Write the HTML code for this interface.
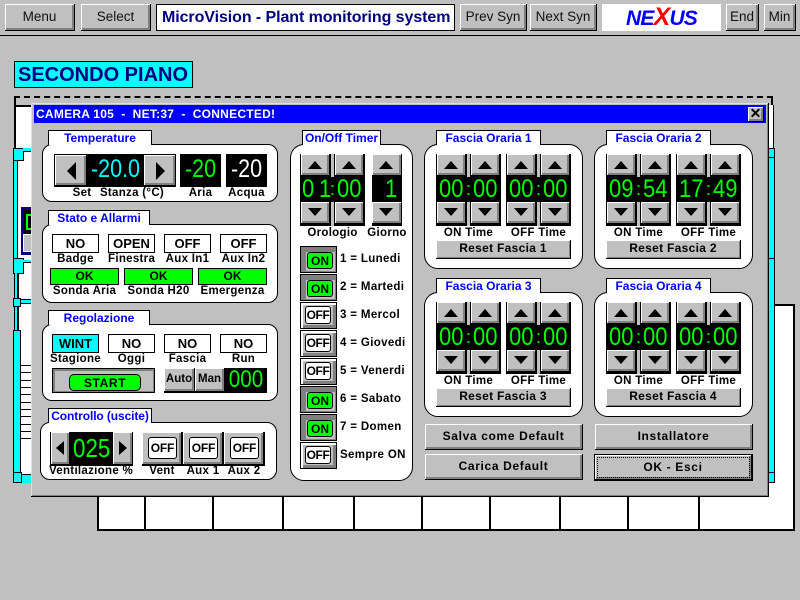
<!DOCTYPE html>
<html><head><meta charset="utf-8"><title>MicroVision</title>
<style>
*{box-sizing:border-box;margin:0;padding:0}
html,body{width:800px;height:600px;overflow:hidden;background:#c0c0c0}
body{position:relative;font-family:"Liberation Sans",sans-serif;color:#000}
div,span{position:absolute}
.b{background:#c0c0c0;border-right:1px solid #000;border-bottom:1px solid #000;box-shadow:inset 1px 1px #fff,inset -1px -1px #808080,inset -2px -2px #808080;text-align:center}
.tb{top:4px;height:27px;font-size:13.5px;line-height:25px;color:#111}
.wl{background:#fff;border:1px solid #000}
.k{background:#000}
.c{background:#0ff;border:1px solid #000}
.tab{background:#fff;border:1px solid #000;border-bottom:0;height:15px;color:#00f;font-size:12px;font-weight:bold;line-height:14px;text-align:center}
.p{background:#fff;border:1px solid #000;border-radius:10px}
.l{font-size:11.5px;font-weight:bold;line-height:13px;text-align:center;white-space:nowrap;letter-spacing:.3px}
.s{background:#fff;color:#000;border:1px solid #000;height:19px;font-size:13px;line-height:17px;text-align:center;width:47px;font-weight:bold}
.g{background:#0f0;border:1px solid #000;height:17px;width:69px;font-size:12px;font-weight:bold;line-height:15px;text-align:center}
.led{color:#0f0;font-size:25px;line-height:25px;text-align:center;white-space:nowrap;transform:scaleX(.86)}
.sp{background:#000;top:0;height:72px}
.sp>.b{height:22px;width:29px}
.strip{top:0;height:72px;width:3px;background:linear-gradient(to bottom,#c0c0c0 23px,#000 23px,#000 48px,#c0c0c0 48px)}
.up:after,.dn:after{content:"";position:absolute;left:7px;border-left:7.5px solid transparent;border-right:7.5px solid transparent}
.up:after{top:7px;border-bottom:8px solid #000}
.dn:after{top:6px;border-top:8px solid #000}
.d{left:300px;width:37px;height:27px;background:#000}
.tg{background:#c0c0c0;left:1px;top:1px;right:1px;bottom:1px;box-shadow:inset 2px 2px #fff,inset -3px -3px #808080}
.on .tg{background:#c0c0c0;box-shadow:inset 5px 5px #808080,inset -1px -1px #808080}
.bx{background:#fff;border:1px solid #000;border-radius:3px;font-size:12px;font-weight:bold;text-align:center;letter-spacing:-.4px;left:5px;top:4px;width:26px;height:18px;line-height:16px}
.on .bx{background:#0f0;left:7px;top:6px;height:17px;line-height:16px;letter-spacing:0}
.dl{left:340px;font-size:11.5px;font-weight:bold;line-height:14px;white-space:nowrap;letter-spacing:.35px}
.num{font-size:25px;line-height:25px;color:#0f0;white-space:nowrap;top:23px;transform:scaleX(.88);transform-origin:0 0}
.cl{font-size:18px;line-height:25px;color:#0f0;top:23px;left:30px}
.n1{left:3px}
.n2{left:37px}
.big{font-size:12px;font-weight:bold;letter-spacing:.65px;line-height:25px;height:26px}
.r{font-size:12px;font-weight:bold;line-height:17px;height:19px;letter-spacing:.3px;box-shadow:inset 1px 1px #fff,inset -1px -1px #808080}
</style></head><body>

<!-- toolbar -->
<div class="k" style="left:0;top:35px;width:800px;height:1px"></div>
<div class="b tb" style="left:5px;width:70px">Menu</div>
<div class="b tb" style="left:81px;width:70px">Select</div>
<div class="wl" style="left:156px;top:4px;width:299px;height:27px;color:#000080;font-size:16px;font-weight:bold;line-height:25px;padding-left:5px;white-space:nowrap;letter-spacing:-.08px">MicroVision - Plant monitoring system</div>
<div class="b tb" style="left:460px;width:67px">Prev Syn</div>
<div class="b tb" style="left:530px;width:67px">Next Syn</div>
<div style="left:602px;top:4px;width:119px;height:27px;background:#fff;text-align:center;font-style:italic;font-weight:bold;font-size:21px;line-height:27px;color:#00f;white-space:nowrap;letter-spacing:-.8px">NE<span style="position:static;color:#f00;font-size:25px">X</span>US</div>
<div class="b tb" style="left:726px;width:33px">End</div>
<div class="b tb" style="left:764px;width:32px">Min</div>

<div style="left:14px;top:61px;width:179px;height:27px;background:#0ff;border:1px solid #000;color:#000080;font-size:20px;font-weight:bold;line-height:26px;padding-left:3px;white-space:nowrap">SECONDO PIANO</div>

<!-- plan behind the dialog -->
<div style="left:14px;top:96px;width:759px;height:10px;border:2px dashed #000;border-bottom:0"></div>
<div style="left:14px;top:105px;width:20px;height:45px;background:#fff;border-left:2px solid #000;border-top:2px solid #000"></div>
<div style="left:17px;top:150px;width:16px;height:330px;background:#fff"></div>
<div class="c" style="left:13px;top:148px;width:11px;height:13px"></div>
<div class="c" style="left:13px;top:160px;width:5px;height:100px"></div>
<div style="left:23px;top:148px;width:9px;height:4px;background:#0ff;border-bottom:1px solid #000"></div>
<div style="left:21px;top:207px;width:11px;height:48px;background:#000080"></div>
<div class="k" style="left:24px;top:210px;width:8px;height:24px"></div>
<div style="left:23px;top:234px;width:9px;height:18px;background:#c0c0c0;border:1px solid #fff"></div>
<div style="left:26px;top:214px;width:6px;height:16px;border:2px solid #0f0;border-right:0"></div>
<div class="c" style="left:13px;top:258px;width:11px;height:16px"></div>
<div style="left:23px;top:260px;width:9px;height:3px;background:#0ff;border-bottom:1px solid #000"></div>
<div class="k" style="left:14px;top:273px;width:5px;height:26px"></div>
<div style="left:15px;top:273px;width:2px;height:26px;background:#0ff"></div>
<div class="c" style="left:13px;top:298px;width:8px;height:9px"></div>
<div style="left:21px;top:299px;width:10px;height:5px;background:#0ff;border-bottom:1px solid #000;border-top:1px solid #000"></div>
<div class="k" style="left:14px;top:307px;width:5px;height:24px"></div>
<div style="left:15px;top:307px;width:2px;height:24px;background:#0ff"></div>
<div class="c" style="left:13px;top:330px;width:8px;height:153px"></div>
<div class="c" style="left:13px;top:472px;width:9px;height:11px"></div>
<div style="left:22px;top:474px;width:9px;height:9px;background:#0ff;border-top:1px solid #000"></div>
<div class="k" style="left:21px;top:365px;width:10px;height:1px"></div>
<div class="k" style="left:21px;top:372px;width:10px;height:1px"></div>
<div class="k" style="left:21px;top:380px;width:10px;height:1px"></div>
<div class="k" style="left:21px;top:387px;width:10px;height:1px"></div>
<div class="k" style="left:21px;top:394px;width:10px;height:1px"></div>
<div class="k" style="left:21px;top:402px;width:10px;height:1px"></div>
<div class="k" style="left:21px;top:409px;width:10px;height:1px"></div>
<div class="k" style="left:21px;top:416px;width:10px;height:1px"></div>
<div class="k" style="left:21px;top:424px;width:10px;height:1px"></div>
<div class="k" style="left:21px;top:431px;width:10px;height:1px"></div>
<div class="k" style="left:21px;top:438px;width:10px;height:1px"></div>

<!-- right side -->
<div style="left:768px;top:105px;width:6px;height:45px;background:#fff;border-left:1px solid #000;border-right:1px solid #000"></div>
<div style="left:760px;top:304px;width:35px;height:227px;background:#fff;border:2px solid #000"></div>
<div class="c" style="left:768px;top:148px;width:7px;height:335px"></div>
<div class="k" style="left:768px;top:157px;width:7px;height:1px"></div>
<div class="k" style="left:768px;top:258px;width:7px;height:1px"></div>
<div class="k" style="left:768px;top:472px;width:7px;height:1px"></div>

<!-- bottom row -->
<div style="left:97px;top:490px;width:698px;height:41px;background:#fff;border:2px solid #000;border-top:0"></div>
<div class="k" style="left:144px;top:490px;width:2px;height:40px"></div>
<div class="k" style="left:212px;top:490px;width:2px;height:40px"></div>
<div class="k" style="left:282px;top:490px;width:2px;height:40px"></div>
<div class="k" style="left:353px;top:490px;width:2px;height:40px"></div>
<div class="k" style="left:421px;top:490px;width:2px;height:40px"></div>
<div class="k" style="left:489px;top:490px;width:2px;height:40px"></div>
<div class="k" style="left:559px;top:490px;width:2px;height:40px"></div>
<div class="k" style="left:627px;top:490px;width:2px;height:40px"></div>
<div class="k" style="left:698px;top:490px;width:2px;height:40px"></div>

<!-- dialog -->
<div style="left:31px;top:103px;width:738px;height:394px;background:#c0c0c0;border-right:1px solid #000;border-bottom:1px solid #000;box-shadow:inset 1px 1px #dfdfdf,inset -1px -1px #808080"></div>
<div style="left:34px;top:105px;width:732px;height:18px;background:#00f;color:#fff;font-size:12px;font-weight:bold;line-height:18px;padding-left:2px;white-space:pre;letter-spacing:.25px">CAMERA 105  -  NET:37  -  CONNECTED!</div>
<div class="b" style="left:748px;top:107px;width:16px;height:15px;font-size:14px;font-weight:bold;line-height:13px">✕</div>

<!-- Temperature -->
<div class="p" style="left:42px;top:144px;width:236px;height:58px"></div>
<div class="tab" style="left:48px;top:130px;width:104px">Temperature</div>
<div class="k" style="left:54px;top:154px;width:122px;height:33px"></div>
<div class="b" style="left:55px;top:155px;width:32px;height:31px"></div>
<div style="left:67px;top:162px;border-right:9px solid #000;border-top:9px solid transparent;border-bottom:9px solid transparent"></div>
<div class="led" style="left:87px;top:157px;width:57px;color:#0ff">-20.0</div>
<div class="b" style="left:144px;top:155px;width:32px;height:31px"></div>
<div style="left:156px;top:162px;border-left:9px solid #000;border-top:9px solid transparent;border-bottom:9px solid transparent"></div>
<div class="k" style="left:180px;top:154px;width:41px;height:33px"></div>
<div class="led" style="left:180px;top:157px;width:41px">-20</div>
<div class="k" style="left:226px;top:154px;width:41px;height:33px"></div>
<div class="led" style="left:226px;top:157px;width:41px;color:#fff">-20</div>
<div class="l" style="left:72px;top:187px;width:20px">Set</div>
<div class="l" style="left:99px;top:187px;width:66px">Stanza (°C)</div>
<div class="l" style="left:180px;top:187px;width:41px">Aria</div>
<div class="l" style="left:226px;top:187px;width:41px">Acqua</div>

<!-- Stato -->
<div class="p" style="left:42px;top:224px;width:236px;height:79px"></div>
<div class="tab" style="left:48px;top:210px;width:102px">Stato e Allarmi</div>
<div class="s" style="left:52px;top:234px">NO</div>
<div class="s" style="left:108px;top:234px">OPEN</div>
<div class="s" style="left:164px;top:234px">OFF</div>
<div class="s" style="left:220px;top:234px">OFF</div>
<div class="l" style="left:52px;top:253px;width:47px">Badge</div>
<div class="l" style="left:108px;top:253px;width:47px">Finestra</div>
<div class="l" style="left:160px;top:253px;width:55px">Aux In1</div>
<div class="l" style="left:216px;top:253px;width:55px">Aux In2</div>
<div class="g" style="left:50px;top:268px">OK</div>
<div class="g" style="left:124px;top:268px">OK</div>
<div class="g" style="left:198px;top:268px">OK</div>
<div class="l" style="left:50px;top:285px;width:69px">Sonda Aria</div>
<div class="l" style="left:124px;top:285px;width:69px">Sonda H20</div>
<div class="l" style="left:198px;top:285px;width:69px">Emergenza</div>

<!-- Regolazione -->
<div class="p" style="left:42px;top:324px;width:236px;height:77px"></div>
<div class="tab" style="left:48px;top:310px;width:102px">Regolazione</div>
<div class="s" style="left:52px;top:334px;background:#0ff">WINT</div>
<div class="s" style="left:108px;top:334px">NO</div>
<div class="s" style="left:164px;top:334px">NO</div>
<div class="s" style="left:220px;top:334px">NO</div>
<div class="l" style="left:50px;top:353px;width:51px">Stagione</div>
<div class="l" style="left:108px;top:353px;width:47px">Oggi</div>
<div class="l" style="left:164px;top:353px;width:47px">Fascia</div>
<div class="l" style="left:220px;top:353px;width:47px">Run</div>
<div style="left:52px;top:368px;width:103px;height:25px;background:#c0c0c0;border:1px solid #000;box-shadow:inset 2px 2px #808080,inset -1px -1px #808080"></div>
<div style="left:69px;top:374px;width:72px;height:17px;background:#0f0;border:1px solid #000;border-radius:5px;font-size:12px;font-weight:bold;text-align:center;line-height:16px;letter-spacing:.6px">START</div>
<div class="k" style="left:164px;top:368px;width:103px;height:25px"></div>
<div class="b l" style="left:164px;top:368px;width:31px;height:24px;line-height:22px;letter-spacing:0">Auto</div>
<div class="b l" style="left:195px;top:368px;width:30px;height:24px;line-height:22px;letter-spacing:0">Man</div>
<div class="led" style="left:225px;top:367px;width:42px;font-size:24px">000</div>

<!-- Controllo -->
<div class="p" style="left:40px;top:422px;width:237px;height:58px"></div>
<div class="tab" style="left:48px;top:408px;width:104px;letter-spacing:-.1px">Controllo (uscite)</div>
<div class="k" style="left:50px;top:432px;width:83px;height:34px"></div>
<div class="b" style="left:51px;top:432px;width:19px;height:33px"></div>
<div style="left:56px;top:441px;border-right:8px solid #000;border-top:7px solid transparent;border-bottom:7px solid transparent"></div>
<div class="led" style="left:70px;top:436px;width:43px;font-size:26px">025</div>
<div class="b" style="left:113px;top:432px;width:20px;height:33px"></div>
<div style="left:119px;top:441px;border-left:8px solid #000;border-top:7px solid transparent;border-bottom:7px solid transparent"></div>
<div class="k" style="left:142px;top:432px;width:123px;height:34px"></div>
<div class="b" style="left:142px;top:432px;width:40px;height:33px"></div>
<div class="b" style="left:183px;top:432px;width:40px;height:33px"></div>
<div class="b" style="left:224px;top:432px;width:40px;height:33px"></div>
<div class="bx" style="left:148px;top:437px;width:29px;height:22px;line-height:20px;letter-spacing:-.2px">OFF</div>
<div class="bx" style="left:189px;top:437px;width:29px;height:22px;line-height:20px;letter-spacing:-.2px">OFF</div>
<div class="bx" style="left:230px;top:437px;width:29px;height:22px;line-height:20px;letter-spacing:-.2px">OFF</div>
<div class="l" style="left:46px;top:465px;width:90px">Ventilazione %</div>
<div class="l" style="left:142px;top:465px;width:40px">Vent</div>
<div class="l" style="left:183px;top:465px;width:40px">Aux 1</div>
<div class="l" style="left:224px;top:465px;width:40px">Aux 2</div>

<!-- On/Off Timer -->
<div class="p" style="left:290px;top:144px;width:123px;height:337px;border-radius:14px"></div>
<div class="tab" style="left:302px;top:130px;width:79px">On/Off Timer</div>
<div class="sp" style="left:300px;top:154px;width:65px"><div class="strip" style="left:31px"></div>
<div class="b up" style="left:1px;top:0"></div><div class="b up" style="left:35px;top:0"></div>
<div class="num" style="left:2px">0</div><div class="num" style="left:19px">1</div><div class="cl">:</div><div class="num n2">00</div>
<div class="b dn" style="left:1px;top:48px"></div><div class="b dn" style="left:35px;top:48px"></div></div>
<div class="sp" style="left:372px;top:154px;width:30px">
<div class="b up" style="left:0;top:0;width:30px"></div>
<div class="num" style="left:13px">1</div>
<div class="b dn" style="left:0;top:48px;width:30px"></div></div>
<div class="l" style="left:300px;top:227px;width:65px">Orologio</div>
<div class="l" style="left:367px;top:227px;width:40px">Giorno</div>

<div class="d on" style="top:246px"><div class="tg"></div><div class="bx">ON</div></div>
<div class="dl" style="top:252px">1 = Lunedi</div>
<div class="d on" style="top:274px"><div class="tg"></div><div class="bx">ON</div></div>
<div class="dl" style="top:280px">2 = Martedi</div>
<div class="d" style="top:302px"><div class="tg"></div><div class="bx">OFF</div></div>
<div class="dl" style="top:308px">3 = Mercol</div>
<div class="d" style="top:330px"><div class="tg"></div><div class="bx">OFF</div></div>
<div class="dl" style="top:336px">4 = Giovedi</div>
<div class="d" style="top:358px"><div class="tg"></div><div class="bx">OFF</div></div>
<div class="dl" style="top:364px">5 = Venerdi</div>
<div class="d on" style="top:386px"><div class="tg"></div><div class="bx">ON</div></div>
<div class="dl" style="top:392px">6 = Sabato</div>
<div class="d on" style="top:414px"><div class="tg"></div><div class="bx">ON</div></div>
<div class="dl" style="top:420px">7 = Domen</div>
<div class="d" style="top:442px"><div class="tg"></div><div class="bx">OFF</div></div>
<div class="dl" style="top:448px">Sempre ON</div>

<!-- Fascia 1 -->
<div class="p" style="left:424px;top:144px;width:159px;height:125px;border-radius:14px"></div>
<div class="tab" style="left:436px;top:130px;width:105px">Fascia Oraria 1</div>
<div class="sp" style="left:436px;top:154px;width:65px"><div class="strip" style="left:31px"></div><div class="b up" style="left:1px;top:0"></div><div class="b up" style="left:35px;top:0"></div><div class="num n1">00</div><div class="cl">:</div><div class="num n2">00</div><div class="b dn" style="left:1px;top:48px"></div><div class="b dn" style="left:35px;top:48px"></div></div>
<div class="sp" style="left:506px;top:154px;width:65px"><div class="strip" style="left:31px"></div><div class="b up" style="left:1px;top:0"></div><div class="b up" style="left:35px;top:0"></div><div class="num n1">00</div><div class="cl">:</div><div class="num n2">00</div><div class="b dn" style="left:1px;top:48px"></div><div class="b dn" style="left:35px;top:48px"></div></div>
<div class="l" style="left:436px;top:227px;width:65px">ON Time</div>
<div class="l" style="left:506px;top:227px;width:65px">OFF Time</div>
<div class="b r" style="left:436px;top:240px;width:135px">Reset Fascia 1</div>

<!-- Fascia 2 -->
<div class="p" style="left:594px;top:144px;width:159px;height:125px;border-radius:14px"></div>
<div class="tab" style="left:606px;top:130px;width:105px">Fascia Oraria 2</div>
<div class="sp" style="left:606px;top:154px;width:65px"><div class="strip" style="left:31px"></div><div class="b up" style="left:1px;top:0"></div><div class="b up" style="left:35px;top:0"></div><div class="num n1">09</div><div class="cl">:</div><div class="num n2">54</div><div class="b dn" style="left:1px;top:48px"></div><div class="b dn" style="left:35px;top:48px"></div></div>
<div class="sp" style="left:676px;top:154px;width:65px"><div class="strip" style="left:31px"></div><div class="b up" style="left:1px;top:0"></div><div class="b up" style="left:35px;top:0"></div><div class="num n1">17</div><div class="cl">:</div><div class="num n2">49</div><div class="b dn" style="left:1px;top:48px"></div><div class="b dn" style="left:35px;top:48px"></div></div>
<div class="l" style="left:606px;top:227px;width:65px">ON Time</div>
<div class="l" style="left:676px;top:227px;width:65px">OFF Time</div>
<div class="b r" style="left:606px;top:240px;width:135px">Reset Fascia 2</div>

<!-- Fascia 3 -->
<div class="p" style="left:424px;top:292px;width:159px;height:125px;border-radius:14px"></div>
<div class="tab" style="left:436px;top:278px;width:105px">Fascia Oraria 3</div>
<div class="sp" style="left:436px;top:302px;width:65px"><div class="strip" style="left:31px"></div><div class="b up" style="left:1px;top:0"></div><div class="b up" style="left:35px;top:0"></div><div class="num n1">00</div><div class="cl">:</div><div class="num n2">00</div><div class="b dn" style="left:1px;top:48px"></div><div class="b dn" style="left:35px;top:48px"></div></div>
<div class="sp" style="left:506px;top:302px;width:65px"><div class="strip" style="left:31px"></div><div class="b up" style="left:1px;top:0"></div><div class="b up" style="left:35px;top:0"></div><div class="num n1">00</div><div class="cl">:</div><div class="num n2">00</div><div class="b dn" style="left:1px;top:48px"></div><div class="b dn" style="left:35px;top:48px"></div></div>
<div class="l" style="left:436px;top:375px;width:65px">ON Time</div>
<div class="l" style="left:506px;top:375px;width:65px">OFF Time</div>
<div class="b r" style="left:436px;top:388px;width:135px">Reset Fascia 3</div>

<!-- Fascia 4 -->
<div class="p" style="left:594px;top:292px;width:159px;height:125px;border-radius:14px"></div>
<div class="tab" style="left:606px;top:278px;width:105px">Fascia Oraria 4</div>
<div class="sp" style="left:606px;top:302px;width:65px"><div class="strip" style="left:31px"></div><div class="b up" style="left:1px;top:0"></div><div class="b up" style="left:35px;top:0"></div><div class="num n1">00</div><div class="cl">:</div><div class="num n2">00</div><div class="b dn" style="left:1px;top:48px"></div><div class="b dn" style="left:35px;top:48px"></div></div>
<div class="sp" style="left:676px;top:302px;width:65px"><div class="strip" style="left:31px"></div><div class="b up" style="left:1px;top:0"></div><div class="b up" style="left:35px;top:0"></div><div class="num n1">00</div><div class="cl">:</div><div class="num n2">00</div><div class="b dn" style="left:1px;top:48px"></div><div class="b dn" style="left:35px;top:48px"></div></div>
<div class="l" style="left:606px;top:375px;width:65px">ON Time</div>
<div class="l" style="left:676px;top:375px;width:65px">OFF Time</div>
<div class="b r" style="left:606px;top:388px;width:135px">Reset Fascia 4</div>

<!-- bottom buttons -->
<div class="b big" style="left:425px;top:424px;width:158px">Salva come Default</div>
<div class="b big" style="left:425px;top:454px;width:158px">Carica Default</div>
<div class="b big" style="left:595px;top:424px;width:158px">Installatore</div>
<div class="b big" style="left:594px;top:454px;width:159px;height:27px;border:1px solid #000;border-right:2px solid #000;border-bottom:2px solid #000;line-height:25px">OK - Esci</div>
<div style="left:597px;top:457px;width:153px;height:21px;border:1px dotted #000"></div>
</body></html>
